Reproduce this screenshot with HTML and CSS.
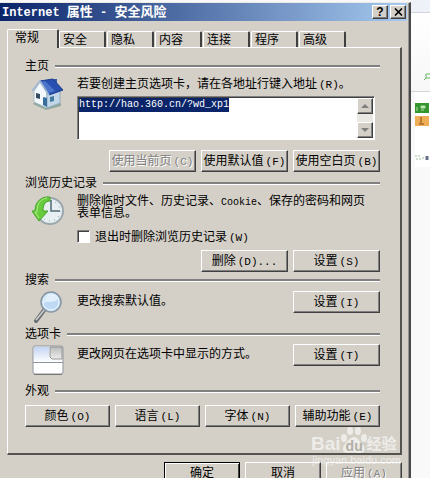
FILE: index.html
```
<!DOCTYPE html>
<html lang="zh-CN">
<head>
   <meta charset="utf-8">
   <title>Internet 属性 - 安全风险</title>
   <link rel="stylesheet" href="styles.css">
</head>
<body>
<div class="desktop">
   <div class="window">
      <div class="titlebar">
         <h1><span class="latin">Internet </span>属性<span class="latin"> - </span>安全风险</h1>
         <button type="button" class="caption" aria-label="帮助">?</button>
         <button type="button" class="caption" aria-label="关闭"><svg width="9" height="8" viewBox="0 0 9 8"><path d="M1 0.5l7 7M8 0.5l-7 7" stroke="#000" stroke-width="1.6"/></svg></button>
      </div>

      <div class="tabs" role="tablist">
         <button type="button" class="tab active" role="tab">常规</button>
         <button type="button" class="tab" role="tab">安全</button>
         <button type="button" class="tab" role="tab">隐私</button>
         <button type="button" class="tab" role="tab">内容</button>
         <button type="button" class="tab" role="tab">连接</button>
         <button type="button" class="tab" role="tab">程序</button>
         <button type="button" class="tab" role="tab">高级</button>
      </div>

      <div class="panel">
         <section class="home">
            <h2>主页</h2>
            <div class="group">
               <svg class="icon" width="32" height="32" viewBox="0 0 32 32">
                  <path d="M3 24l11 6 15-5v3l-15 4L1 26z" fill="#8fa99c"/>
                  <path d="M2 13L8 4l7 11v15L2 24z" fill="#f2f8fc" stroke="#a9bac8"/>
                  <path d="M15 15l13-3v13l-13 5z" fill="#c2d7e9" stroke="#94aabc"/>
                  <path d="M21 1h4v6h-4z" fill="#3b5cac"/>
                  <path d="M8 3l13-2 10 11-14 5z" fill="#2850b0" stroke="#183b8b"/>
                  <path d="M8 4l5-1 10 10-6 2z" fill="#4b74cb"/>
                  <path d="M0 13l8-10 9 14" fill="none" stroke="#9db6d3" stroke-width="1.5"/>
                  <path d="M4 15l4 1v5l-4-1z" fill="#344b60"/>
                  <path d="M11 19l4 1v9l-4-2z" fill="#366f9d"/>
                  <path d="M18 19l4-1v5l-4 1z" fill="#42799c"/>
               </svg>
               <div class="content">
                  <label for="homepage">若要创建主页选项卡，请在各地址行键入地址<span class="key">(R)</span>。</label>
                  <div class="field">
                     <textarea id="homepage" spellcheck="false">http://hao.360.cn/?wd_xp1</textarea>
                     <div class="scroller">
                        <button type="button" aria-label="上"><svg width="8" height="4" viewBox="0 0 8 4"><path d="M0 4l4-4 4 4z" fill="#808080"/></svg></button>
                        <button type="button" aria-label="下"><svg width="8" height="4" viewBox="0 0 8 4"><path d="M0 0h8L4 4z" fill="#808080"/></svg></button>
                     </div>
                  </div>
               </div>
            </div>
            <div class="actions">
               <button type="button" class="btn" disabled>使用当前页<span class="key">(C)</span></button>
               <button type="button" class="btn">使用默认值<span class="key">(F)</span></button>
               <button type="button" class="btn">使用空白页<span class="key">(B)</span></button>
            </div>
         </section>

         <section class="history">
            <h2>浏览历史记录</h2>
            <div class="group">
               <svg class="icon" width="32" height="32" viewBox="0 0 32 32">
                  <circle cx="18" cy="16" r="13" fill="#e8eff2" stroke="#9aa7ad" stroke-width="2"/>
                  <circle cx="18" cy="16" r="10" fill="none" stroke="#87979f" stroke-dasharray="1 4.24"/>
                  <path d="M19 5v11h9" fill="none" stroke="#526b79" stroke-width="1.5"/>
                  <path d="M18 2C9 1 3 7 3 16H0l7 10 9-10h-5c0-6 2-10 7-10z" fill="#67cb3d" stroke="#42a329"/>
                  <path d="M15 3C8 4 5 9 5 17H3l4 6" fill="none" stroke="#b2ef88"/>
               </svg>
               <div class="content">
                  <p>删除临时文件、历史记录、<span class="latin">Cookie</span>、保存的密码和网页表单信息。</p>
                  <label class="check"><input type="checkbox"><span>退出时删除浏览历史记录<span class="key">(W)</span></span></label>
               </div>
            </div>
            <div class="actions">
               <button type="button" class="btn">删除<span class="key">(D)...</span></button>
               <button type="button" class="btn">设置<span class="key">(S)</span></button>
            </div>
         </section>

         <section class="search">
            <h2>搜索</h2>
            <div class="group">
               <svg class="icon" width="32" height="32" viewBox="0 0 32 32">
                  <path d="M13 18L4 30" stroke="#696e72" stroke-width="4" stroke-linecap="round"/>
                  <path d="M13 18L4 29" stroke="#d0d3d4" stroke-width="1.5"/>
                  <circle cx="19" cy="11" r="10" fill="#bdd9f3" stroke="#8996a1" stroke-width="1.5"/>
                  <circle cx="19" cy="11" r="8" fill="none" stroke="#eef8ff"/>
                  <path d="M12 12c4-3 9 1 14-4-1-9-14-6-14 4z" fill="#e2f0fb"/>
               </svg>
               <p>更改搜索默认值。</p>
               <button type="button" class="btn">设置<span class="key">(I)</span></button>
            </div>
         </section>

         <section class="tabbing">
            <h2>选项卡</h2>
            <div class="group">
               <svg class="icon" width="32" height="32" viewBox="0 0 32 32">
                  <defs>
                     <linearGradient id="pane" x2="0" y2="1"><stop stop-color="#c3d4f2"/><stop offset="1" stop-color="#fff"/></linearGradient>
                     <linearGradient id="back" x2="0" y2="1"><stop stop-color="#bbb"/><stop offset="1" stop-color="#eee"/></linearGradient>
                  </defs>
                  <rect x="1" y="2" width="30" height="28" rx="2" fill="#fff" stroke="#8e949b"/>
                  <path d="M2 3h15v13h13v2H2z" fill="url(#pane)"/>
                  <path d="M18 3h12v12H20l-2-2z" fill="url(#back)" stroke="#949494"/>
                  <path d="M1 18.5h30" stroke="#8e949b"/>
                  <path d="M2 30.5h28" stroke="#777"/>
               </svg>
               <p>更改网页在选项卡中显示的方式。</p>
               <button type="button" class="btn">设置<span class="key">(T)</span></button>
            </div>
         </section>

         <section class="look">
            <h2>外观</h2>
            <div class="row">
               <button type="button" class="btn">颜色<span class="key">(O)</span></button>
               <button type="button" class="btn">语言<span class="key">(L)</span></button>
               <button type="button" class="btn">字体<span class="key">(N)</span></button>
               <button type="button" class="btn">辅助功能<span class="key">(E)</span></button>
            </div>
         </section>
      </div>

      <div class="footer">
         <button type="button" class="btn default">确定</button>
         <button type="button" class="btn">取消</button>
         <button type="button" class="btn" disabled>应用<span class="key">(A)</span></button>
      </div>

      <div class="watermark">
         <div class="brand">Bai<span class="paw"><svg width="26" height="28" viewBox="0 0 26 28"><g fill="#f5f4f1"><ellipse cx="9" cy="5" rx="3" ry="4"/><ellipse cx="17" cy="5" rx="3" ry="4"/><ellipse cx="3" cy="12" rx="3" ry="4"/><ellipse cx="23" cy="12" rx="3" ry="4"/><path d="M13 11c4 0 5 4 8 7 4 4 3 9-2 9-3 0-9-1-12 0-5 0-7-4-3-9 3-3 5-7 9-7z"/></g></svg><b>du</b></span><span class="cn">经验</span></div>
         <div class="site">jingyan.baidu.com</div>
      </div>
   </div>

   <div class="page">
      <div class="bar"></div>
      <div class="head"><svg width="7" height="8" viewBox="0 0 7 8"><path d="M2 1h5M2 1v4h5M0 7l2-2" fill="none" stroke="#69b564"/></svg></div>
      <div class="list">
         <svg width="14" height="64" viewBox="0 0 14 64">
            <path d="M0 0h14v10H0z" fill="#35962e"/>
            <path d="M6 3h4v2H6zM6 7h3M2 4v4" fill="#d9f0cf" stroke="#b5dfaa"/>
            <path d="M0 13h14v10H0z" fill="#efae55"/>
            <path d="M6 14v6M4 21h5" stroke="#7d4b19"/>
            <path d="M0 53h5M1 56h5M7 55h3" stroke="#9fbd99" stroke-dasharray="2 1"/>
            <path d="M12 53v4" stroke="#667088" stroke-width="3"/>
         </svg>
      </div>
   </div>
</div>

<script type="text/javascript">

var homepage = document.getElementById('homepage');

homepage.focus();
homepage.select();

</script>
</body>
</html>
```
FILE: styles.css
```
* {
      box-sizing: border-box;
}

body {
      margin: 0;
      overflow: hidden;
      background: #f8f8f9;
      color: #000;
      font: 12px/12px "Liberation Sans", "Noto Sans CJK SC", sans-serif;
}

h1, h2, p {
      margin: 0;
      font-size: 12px;
      font-weight: normal;
}

button, textarea {
      font: inherit;
      color: inherit;
      margin: 0;
      padding: 0;
      border-radius: 0;
}

.desktop {
      display: grid;
      grid-template-columns: 1fr 19px;
      height: 100vh;
      padding-top: 2px;
      overflow: hidden;
}

.latin, .key {
      font-family: "Liberation Mono", monospace;
      font-size: 10px;
      line-height: 0;
}

.key {
      margin-left: 2px;
      font-size: 11px;
}

/* window frame */
.window {
      position: relative;
      height: max-content;
      min-height: 100%;
      background: #d4d0c8;
      border-top: 1px solid #eceae6;
      border-right: 2px solid #48484a;
      box-shadow: inset -1px 0 #98958f;
}

.titlebar {
      display: flex;
      align-items: center;
      height: 18px;
      margin-right: 2px;
      padding: 0 1px 0 2px;
      background: linear-gradient(to right, #0a246a, #a6caf0);
      color: #fff;
}

.titlebar h1 {
      flex: 1;
      font-size: 13px;
      line-height: 18px;
      font-weight: bold;
      white-space: pre;
}

.titlebar .latin {
      font-size: 12px;
}

.caption {
      display: flex;
      align-items: center;
      justify-content: center;
      width: 16px;
      height: 14px;
      margin-left: 2px;
      background: #d4d0c8;
      border: 1px solid;
      border-color: #fff #404040 #404040 #fff;
      box-shadow: inset -1px -1px #808080;
      color: #000;
      font-weight: bold;
}

/* tabs */
.tabs {
      display: flex;
      align-items: flex-end;
      height: 26px;
      padding-left: 7px;
}

.tab {
      width: 47px;
      height: 16px;
      margin-right: 1px;
      padding: 0 0 0 3px;
      background: #d4d0c8;
      border: 1px solid #fff;
      border-right: 2px solid #404040;
      border-bottom: 0;
      border-radius: 2px 2px 0 0;
      text-align: left;
}

.tab.active {
      position: relative;
      z-index: 1;
      width: 52px;
      height: 19px;
      margin-right: 0;
      margin-bottom: -1px;
      padding: 0 0 2px 7px;
}

.panel {
      margin: 0 7px 0 7px;
      padding: 12px 20px 26px 17px;
      border: 1px solid #fff;
      border-right: 2px solid #55534f;
      border-bottom: 2px solid #55534f;
}

section h2 {
      display: flex;
      align-items: center;
      gap: 6px;
}

section h2:after {
      content: "";
      flex: 1;
      height: 2px;
      background: #808080;
      border-bottom: 1px solid #fff;
}

.group {
      display: flex;
      padding-left: 7px;
}

.group p {
      flex: 1;
}

.icon {
      flex: none;
      margin-right: 13px;
}

.content {
      flex: 1;
      margin-right: 5px;
}

.content label {
      display: block;
      white-space: nowrap;
}

.actions {
      display: flex;
      justify-content: flex-end;
      gap: 5px;
}

.btn {
      width: 87px;
      height: 22px;
      background: #d4d0c8;
      border: 1px solid;
      border-color: #fff #404040 #404040 #fff;
      box-shadow: inset -1px -1px #808080;
      white-space: nowrap;
}

.btn:disabled {
      color: #808080;
      text-shadow: 1px 1px #fff;
}

.home .group, .history .group {
      padding-top: 6px;
}

.home .actions {
      padding: 10px 0 5px;
}

.history .actions {
      padding: 7px 0 2px;
}

/* address box */
.field {
      display: flex;
      height: 44px;
      margin-top: 6px;
      background: #fff;
      border: 1px solid;
      border-color: #808080 #fff #fff #808080;
      box-shadow: inset 1px 1px #404040;
      padding: 1px;
}

.field textarea {
      flex: 1;
      min-width: 0;
      border: 0;
      outline: 0;
      resize: none;
      overflow: hidden;
      background: none;
      font: 10px/14px "Liberation Mono", monospace;
}

.field textarea::selection {
      background: #0a246a;
      color: #fff;
}

.scroller {
      display: flex;
      flex-direction: column;
      justify-content: space-between;
      width: 16px;
      background: #eae8e4;
}

.scroller button {
      display: flex;
      align-items: center;
      justify-content: center;
      height: 16px;
      background: #d4d0c8;
      border: 1px solid;
      border-color: #fff #404040 #404040 #fff;
      box-shadow: inset -1px -1px #808080;
}

.content .check {
      display: flex;
      align-items: center;
      gap: 5px;
      margin-top: 11px;
}

.check input {
      appearance: none;
      width: 13px;
      height: 13px;
      margin: 0;
      background: #fff;
      border: 1px solid;
      border-color: #808080 #fff #fff #808080;
      box-shadow: inset 1px 1px #404040;
}

.search .group {
      padding-top: 5px;
      height: 42px;
}

.tabbing .group {
      padding-top: 4px;
      height: 45px;
}

.search p, .tabbing p {
      padding-top: 4px;
}

.row {
      display: grid;
      grid-template-columns: repeat(4, 1fr);
      gap: 5px;
      padding-top: 8px;
}

.row .btn {
      width: auto;
}

.footer {
      display: flex;
      justify-content: flex-end;
      gap: 5px;
      padding: 7px 7px;
}

.footer .btn {
      width: 76px;
}

.btn.default {
      border-color: #000;
      box-shadow: inset 1px 1px #fff, inset -1px -1px #404040;
}

.watermark {
      position: absolute;
      top: 423px;
      right: 8px;
      width: 90px;
      color: #f5f4f1;
      opacity: 0.8;
}

.brand {
      display: flex;
      align-items: flex-end;
      height: 28px;
      font-size: 19px;
      line-height: 20px;
      font-weight: bold;
}

.paw {
      position: relative;
      height: 28px;
}

.paw b {
      position: absolute;
      left: 5px;
      bottom: 0;
      color: #aaa7a1;
      font-size: 14px;
      line-height: 16px;
}

.cn {
      font-size: 15px;
}

.site {
      font-size: 11px;
      white-space: nowrap;
      text-align: right;
}

/* strip of the page behind the window */
.page {
      margin-top: -2px;
      background: #f9f9fa;
}

.bar {
      height: 13px;
      background: #eef1f7;
      border-bottom: 1px solid #cfd4dc;
}

.head {
      height: 79px;
      padding: 58px 0 0 13px;
      background: linear-gradient(#fff, #f7f7f7);
      border-bottom: 1px solid #d5d5d5;
}

.list {
      margin-left: 4px;
      height: 75px;
      padding-top: 11px;
      background: #fff;
}
```
